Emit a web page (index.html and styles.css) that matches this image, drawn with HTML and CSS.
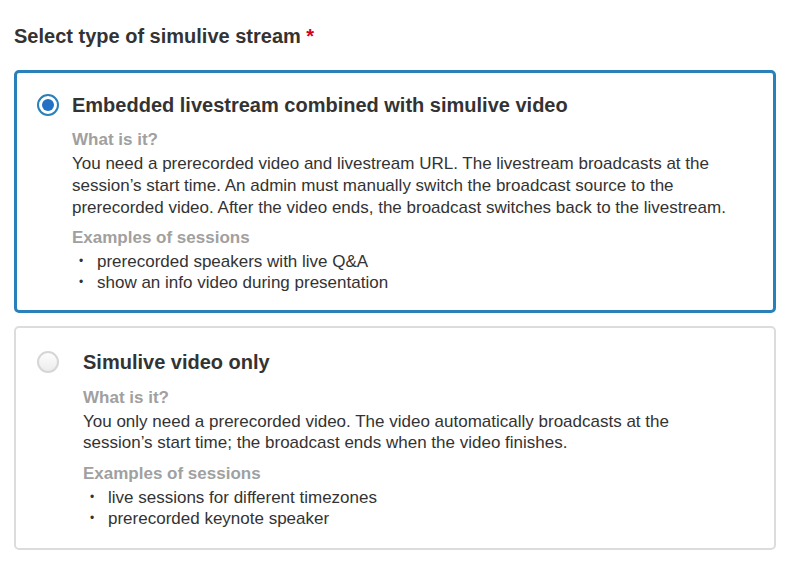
FILE: index.html
```html
<!DOCTYPE html>
<html lang="en">
<head>
    <meta charset="UTF-8">
    <meta name="viewport" content="width=device-width, initial-scale=1.0">
    <title>Simulive stream type</title>
    <link rel="stylesheet" href="styles.css">
</head>
<body>

    <h2 class="field-title">Select type of simulive stream <span class="required">*</span></h2>

    <!-- Stream type options -->
    <div class="option-list">
        <label class="option-card selected">
            <span class="radio checked"></span>
            <div class="option-body">
                <h3 class="option-title">Embedded livestream combined with simulive video</h3>
                <h4 class="option-label">What is it?</h4>
                <p class="option-text">You need a prerecorded video and livestream URL. The livestream broadcasts at the session’s start time. An admin must manually switch the broadcast source to the prerecorded video. After the video ends, the broadcast switches back to the livestream.</p>
                <h4 class="option-label">Examples of sessions</h4>
                <ul class="option-examples">
                    <li>prerecorded speakers with live Q&amp;A</li>
                    <li>show an info video during presentation</li>
                </ul>
            </div>
        </label>

        <label class="option-card">
            <span class="radio"></span>
            <div class="option-body wide-gap">
                <h3 class="option-title">Simulive video only</h3>
                <h4 class="option-label">What is it?</h4>
                <p class="option-text">You only need a prerecorded video. The video automatically broadcasts at the session’s start time; the broadcast ends when the video finishes.</p>
                <h4 class="option-label">Examples of sessions</h4>
                <ul class="option-examples">
                    <li>live sessions for different timezones</li>
                    <li>prerecorded keynote speaker</li>
                </ul>
            </div>
        </label>
    </div>

</body>
</html>
```

FILE: styles.css
```css
/* General page styles */
body {
    font-family: 'Liberation Sans', Arial, sans-serif;
    margin: 0;
    padding: 25px 10px 0 14px;
    background-color: #ffffff;
    color: #333;
}

/* Header */
.field-title {
    font-size: 20px;
    line-height: 22px;
    font-weight: bold;
    margin: 0 0 23px;
    color: #333;
}

.required {
    color: #d0021b;
}

/* Option cards */
.option-card {
    display: flex;
    align-items: flex-start;
    padding: 22px 40px 19px 21px;
    margin-bottom: 13px;
    border: 2px solid #dcdcdc;
    border-radius: 5px;
    background-color: #fff;
    cursor: pointer;
}

.option-card.selected {
    border: 3px solid #2a80b9;
    padding: 20px 20px 17px 20px;
}

.radio {
    flex: none;
    width: 18px;
    height: 18px;
    margin-top: 1px;
    border: 2px solid #d6d6d6;
    border-radius: 50%;
    background: linear-gradient(#fdfdfd, #ececec);
    position: relative;
}

.radio.checked {
    border-color: #2a80b9;
    background: #fff;
}

.radio.checked::after {
    content: "";
    position: absolute;
    top: 3px;
    left: 3px;
    width: 12px;
    height: 12px;
    border-radius: 50%;
    background-color: #2271c4;
}

.option-body {
    margin-left: 13px;
}

.option-title {
    font-size: 20px;
    line-height: 24px;
    font-weight: bold;
    margin: 0 0 12px;
    color: #333;
}

.option-label {
    font-size: 17px;
    line-height: 22px;
    font-weight: bold;
    color: #a0a0a0;
    margin: 0 0 2px;
}

.option-text {
    font-size: 17px;
    line-height: 22px;
    margin: 0 0 8px;
}

/* Second option has a wider gutter and tighter copy */
.option-body.wide-gap {
    margin-left: 24px;
}

.wide-gap .option-title {
    margin-bottom: 13px;
}

.wide-gap .option-text {
    line-height: 21px;
    margin-bottom: 10px;
}

.option-examples {
    list-style: none;
    margin: 2px 0 0;
    padding: 0;
    font-size: 17px;
    line-height: 21px;
}

.option-examples li {
    position: relative;
    padding-left: 25px;
}

.option-examples li::before {
    content: "•";
    position: absolute;
    left: 7px;
    font-size: 12px;
}
```
